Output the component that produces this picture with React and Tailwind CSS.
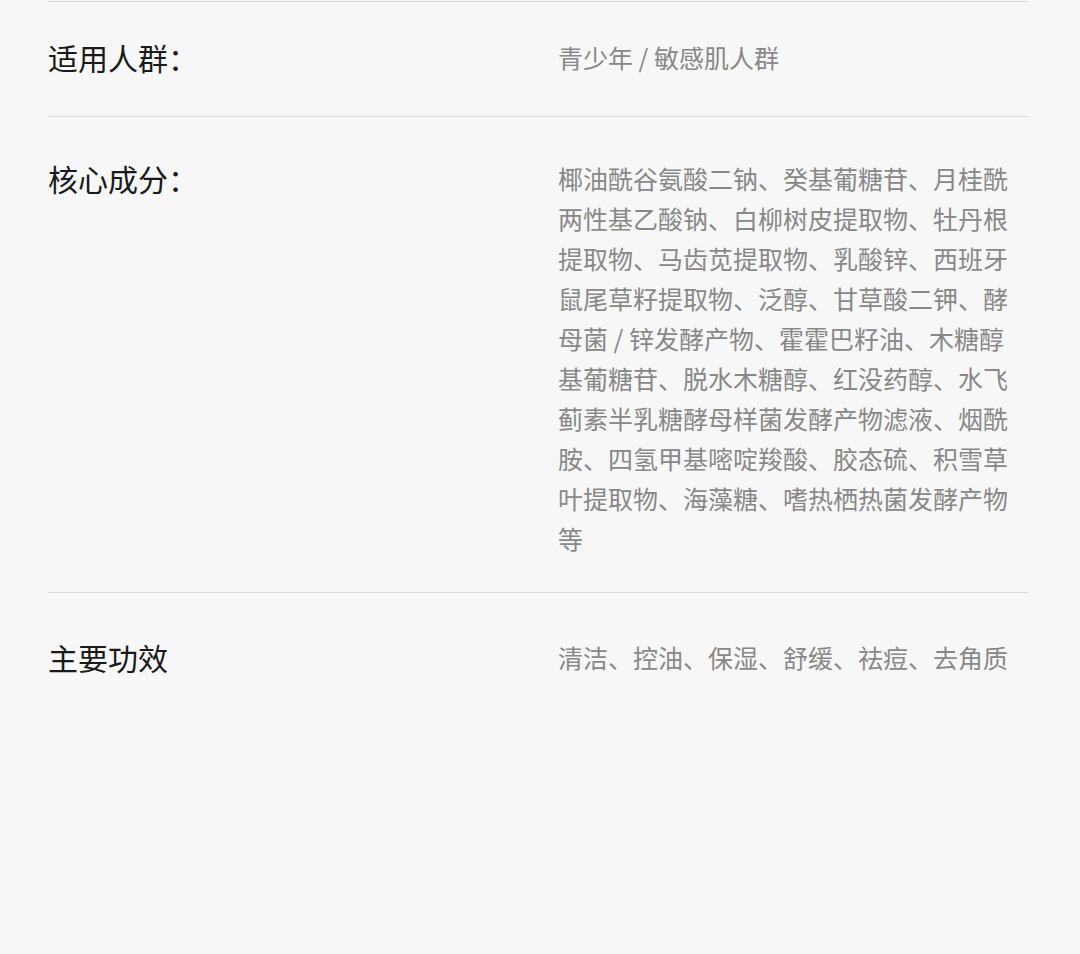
export default function App() {
  const font = { fontFamily: '"Noto Sans CJK SC", "Noto Sans", sans-serif' };
  const lines = [
    "椰油酰谷氨酸二钠、癸基葡糖苷、月桂酰",
    "两性基乙酸钠、白柳树皮提取物、牡丹根",
    "提取物、马齿苋提取物、乳酸锌、西班牙",
    "鼠尾草籽提取物、泛醇、甘草酸二钾、酵",
    "母菌 / 锌发酵产物、霍霍巴籽油、木糖醇",
    "基葡糖苷、脱水木糖醇、红没药醇、水飞",
    "蓟素半乳糖酵母样菌发酵产物滤液、烟酰",
    "胺、四氢甲基嘧啶羧酸、胶态硫、积雪草",
    "叶提取物、海藻糖、嗜热栖热菌发酵产物",
    "等",
  ];
  return (
    <div className="w-full min-h-[954px] bg-[#f7f7f7] pt-px" style={font}>
      <div className="mx-[48px] w-[980px]">
        <div className="flex border-t border-[#d9d9d9] pt-[35px] pb-[39px]">
          <div className="w-[510px] shrink-0 text-[30px] leading-[40px] text-[#1a1a1a]">适用人群：</div>
          <div className="w-[460px] text-[25px] leading-[40px] text-[#888888]">青少年 / 敏感肌人群</div>
        </div>
        <div className="flex border-t border-[#d9d9d9] pt-[41px] pb-[34px]">
          <div className="w-[510px] shrink-0 text-[30px] leading-[40px] text-[#1a1a1a]">核心成分：</div>
          <div className="w-[460px] text-[25px] leading-[40px] text-[#888888]">
            {lines.map((l, i) => (
              <div key={i} className="whitespace-nowrap">{l}</div>
            ))}
          </div>
        </div>
        <div className="flex border-t border-[#d9d9d9] pt-[44px]">
          <div className="w-[510px] shrink-0 text-[30px] leading-[40px] text-[#1a1a1a]">主要功效</div>
          <div className="w-[460px] text-[25px] leading-[40px] text-[#888888]">清洁、控油、保湿、舒缓、祛痘、去角质</div>
        </div>
      </div>
    </div>
  );
}
